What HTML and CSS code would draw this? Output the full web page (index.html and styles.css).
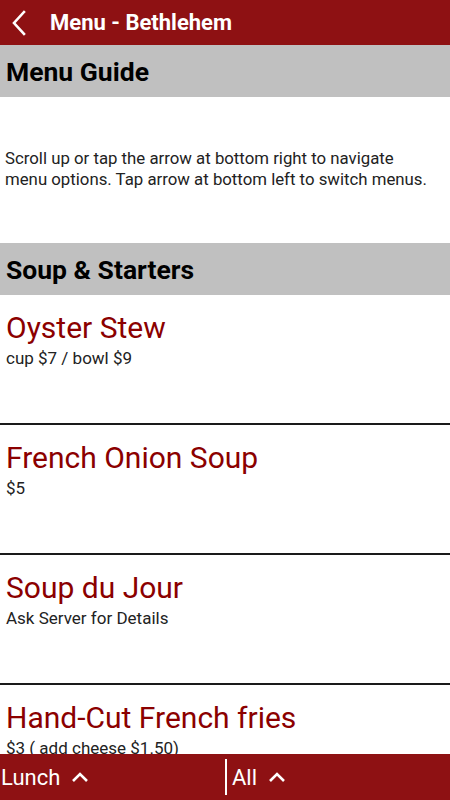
FILE: index.html
```html
<!DOCTYPE html>
<html lang="en">
<head>
  <meta charset="UTF-8">
  <meta name="viewport" content="width=device-width, initial-scale=1.0">
  <title>Menu - Bethlehem</title>
  <link rel="stylesheet" href="styles.css">
</head>
<body>

  <!-- Top bar -->
  <div class="topbar">
    <span class="back">
      <svg width="16" height="26" viewBox="0 0 16 26">
        <path d="M13 2 L3 13 L13 24" fill="none" stroke="#fff" stroke-width="2.6" stroke-linecap="square"/>
      </svg>
    </span>
    <span class="title">Menu - Bethlehem</span>
  </div>

  <!-- Menu content -->
  <div class="content">
    <div class="section-head">Menu Guide</div>
    <div class="guide">
      Scroll up or tap the arrow at bottom right to navigate menu options. Tap arrow at bottom left to switch menus.
    </div>

    <div class="section-head">Soup &amp; Starters</div>

    <div class="item">
      <div class="item-name">Oyster Stew</div>
      <div class="item-price">cup $7 / bowl $9</div>
    </div>
    <div class="item">
      <div class="item-name">French Onion Soup</div>
      <div class="item-price">$5</div>
    </div>
    <div class="item">
      <div class="item-name">Soup du Jour</div>
      <div class="item-price">Ask Server for Details</div>
    </div>
    <div class="item">
      <div class="item-name">Hand-Cut French fries</div>
      <div class="item-price">$3 ( add cheese $1.50)</div>
    </div>
  </div>

  <!-- Bottom bar -->
  <div class="bottombar">
    <div class="switch">
      Lunch
      <svg width="20" height="12" viewBox="0 0 20 12">
        <path d="M3 10 L10 3 L17 10" fill="none" stroke="#fff" stroke-width="2.6"/>
      </svg>
    </div>
    <div class="switch right">
      All
      <svg width="20" height="12" viewBox="0 0 20 12">
        <path d="M3 10 L10 3 L17 10" fill="none" stroke="#fff" stroke-width="2.6"/>
      </svg>
    </div>
  </div>

</body>
</html>
```

FILE: styles.css
```css
* {
  margin: 0;
  padding: 0;
  box-sizing: border-box;
}

body {
  font-family: Roboto, "Liberation Sans", sans-serif;
  height: 800px;
  display: flex;
  flex-direction: column;
  background-color: #fff;
  overflow: hidden;
}

/* Top bar */
.topbar {
  height: 45px;
  flex-shrink: 0;
  background-color: #8e1113;
  color: #fff;
  display: flex;
  align-items: center;
}

.topbar .back {
  width: 50px;
  display: flex;
  padding-left: 11px;
}

.topbar .title {
  font-size: 22px;
  font-weight: bold;
}

/* Content */
.content {
  flex-grow: 1;
  overflow: hidden;
}

.section-head {
  background-color: #c0c0c0;
  height: 52px;
  line-height: 53px;
  padding-left: 6px;
  font-size: 26.5px;
  font-weight: bold;
  color: #000;
}

.guide {
  padding: 51px 20px 53px 5px;
  font-size: 16.8px;
  line-height: 21px;
  color: #222;
}

.item {
  height: 130px;
  padding: 16px 6px 0 6px;
  border-bottom: 2px solid #1a1a1a;
}

.item-name {
  font-size: 30px;
  line-height: 34px;
  color: #8b0000;
}

.item-price {
  margin-top: 2px;
  font-size: 17px;
  line-height: 22px;
  color: #222;
}

/* Bottom bar */
.bottombar {
  height: 46px;
  flex-shrink: 0;
  background-color: #8e1113;
  display: flex;
  align-items: center;
}

.switch {
  width: 225px;
  height: 100%;
  display: flex;
  align-items: center;
  gap: 10px;
  padding-left: 1px;
  color: #fff;
  font-size: 22px;
}

.switch.right {
  border-left: 2px solid #fff;
  height: 36px;
  padding-left: 5px;
}
```
